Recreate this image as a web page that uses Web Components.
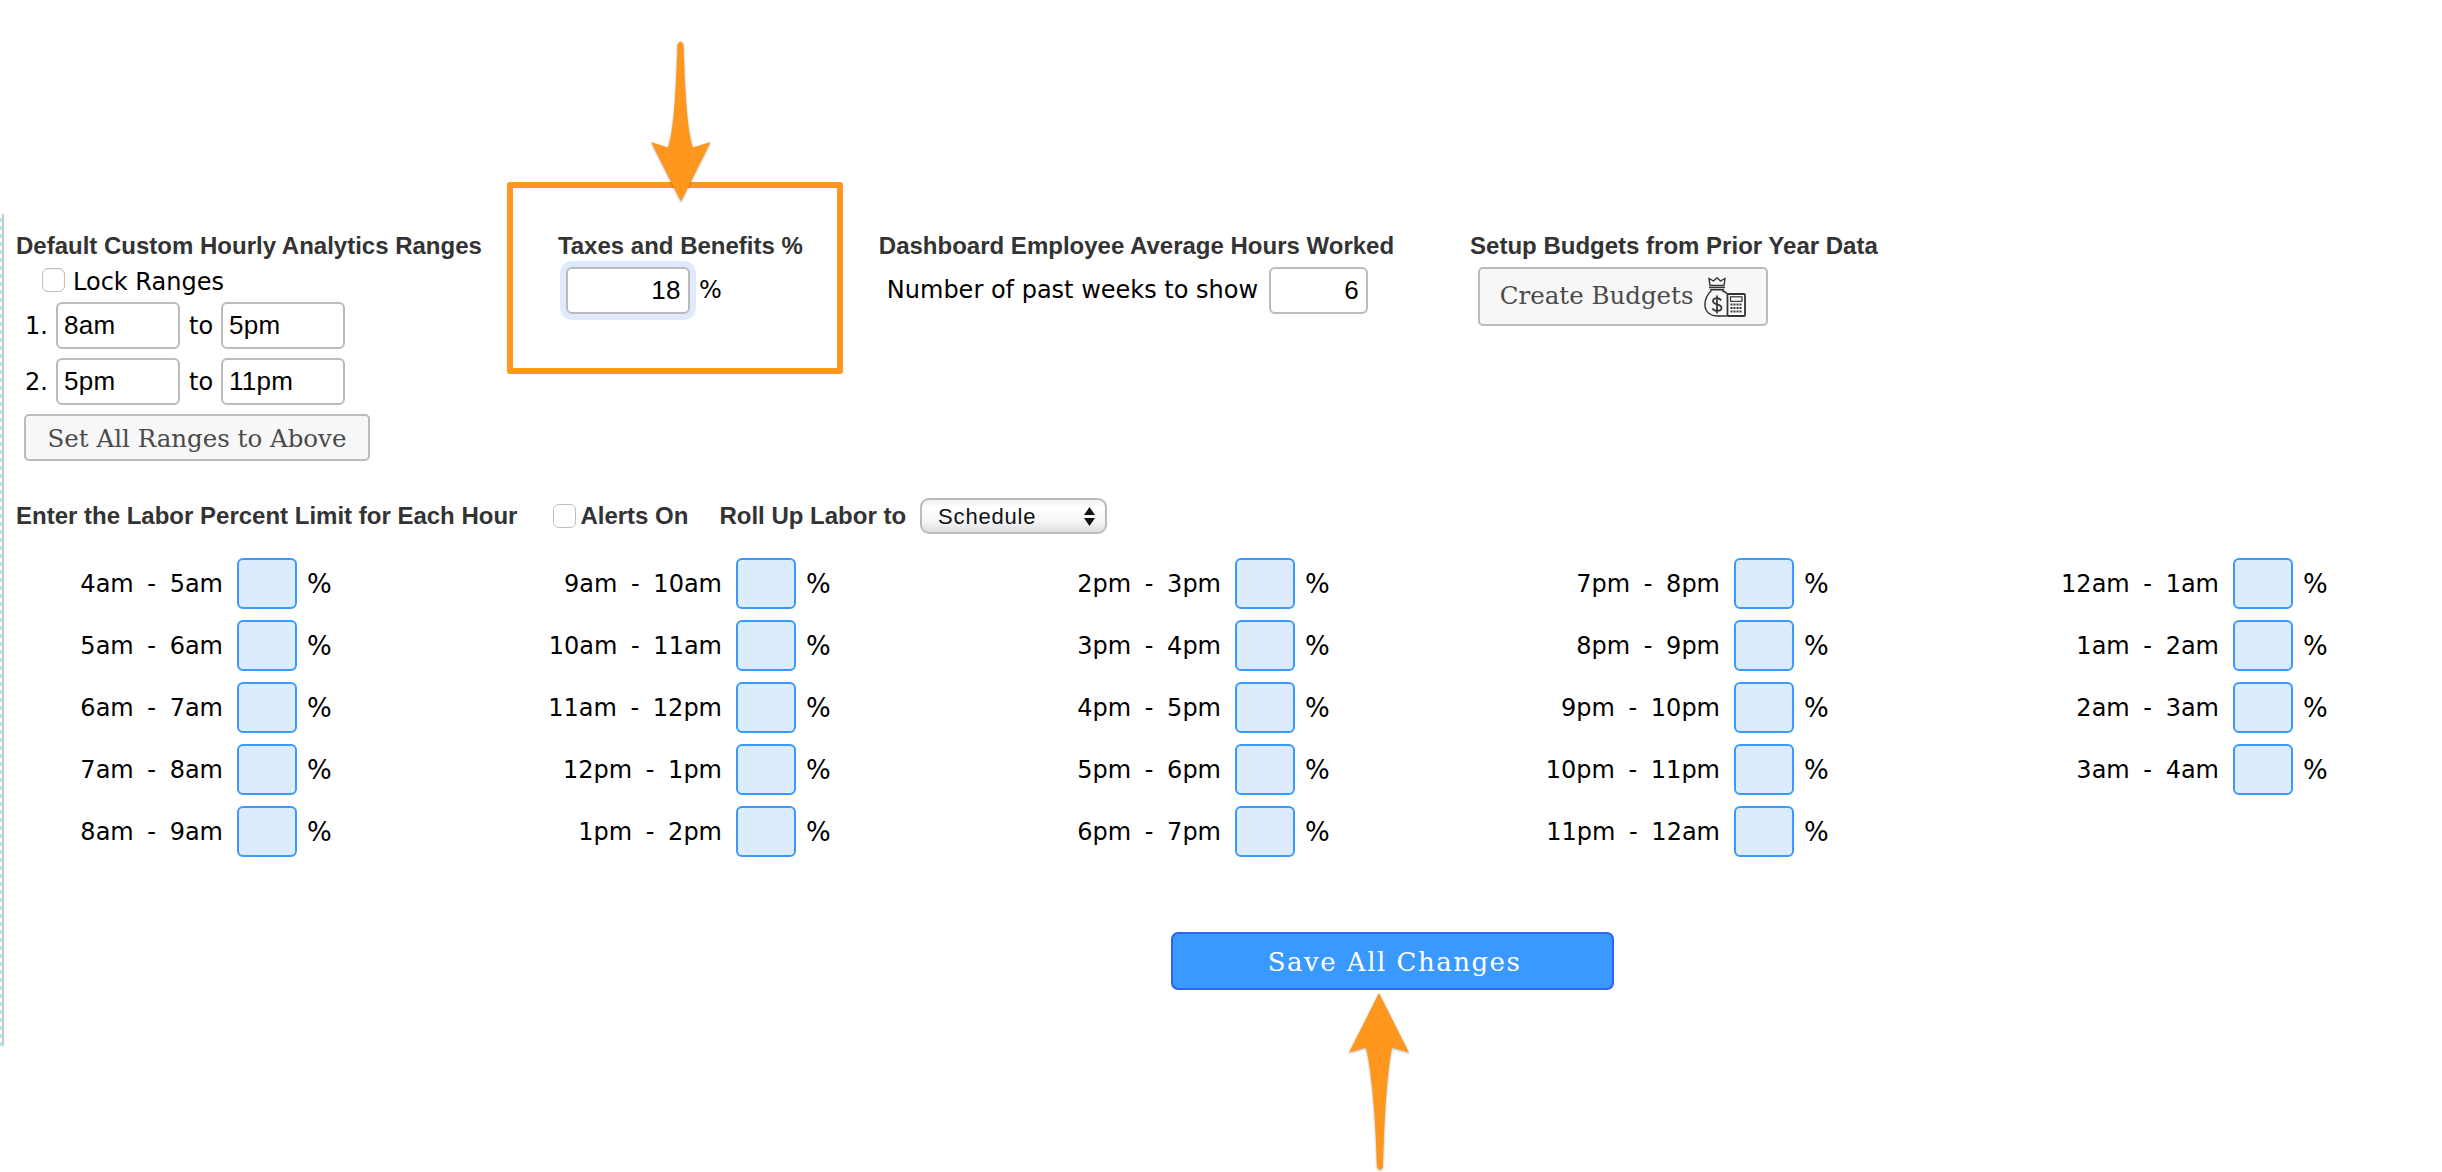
<!DOCTYPE html>
<html>
<head>
<meta charset="utf-8">
<title>Labor Settings</title>
<style>
html, body { margin: 0; padding: 0; background: #fff; }
body { position: relative; height: 1172px; overflow: hidden; font-family: "DejaVu Sans", sans-serif; }
</style>
</head>
<body>
<settings-panel>
  <div slot="top">
    <setting-group heading="Default Custom Hourly Analytics Ranges">
      <check-label indent="26">Lock Ranges</check-label>
      <range-row index="1." from="8am" to="5pm"></range-row>
      <range-row index="2." from="5pm" to="11pm"></range-row>
      <push-button style="margin-left:8px;width:346px;height:47px;--nudge-top:2px">Set All Ranges to Above</push-button>
    </setting-group>
    <setting-group heading="Taxes and Benefits %">
      <value-row indent="8" value="18" width="124" focused>
        <span slot="after">%</span>
      </value-row>
    </setting-group>
    <setting-group heading="Dashboard Employee Average Hours Worked">
      <value-row indent="8" value="6" width="99" gap="11">
        <span slot="before">Number of past weeks to show</span>
      </value-row>
    </setting-group>
    <setting-group heading="Setup Budgets from Prior Year Data">
      <push-button style="margin-left:8px;margin-top:8px;width:290px;height:59px;--nudge-bottom:2px">
        Create Budgets
        <budget-icon slot="icon"></budget-icon>
      </push-button>
    </setting-group>
  </div>
  <labor-header slot="labor"></labor-header>
  <hour-grid slot="grid"></hour-grid>
  <save-button slot="save">Save All Changes</save-button>
</settings-panel>
<callout-box></callout-box>
<callout-arrow dir="down"></callout-arrow>
<callout-arrow dir="up"></callout-arrow>

<script>
const headingFont = `"Liberation Sans", Arial, sans-serif`;
const slabFont = `"DejaVu Serif", serif`;

class SettingsPanel extends HTMLElement {
  constructor() {
    super();
    this.attachShadow({ mode: "open" });
    this.shadowRoot.innerHTML = `
      <style>
        :host { display: block; margin-top: 214px; height: 832px; position: relative; box-sizing: border-box; padding: 19px 0 0 16px; color: #000; font: 24px "DejaVu Sans", sans-serif; }
        .strip { position: absolute; left: 0; top: 0; bottom: 0; width: 2px; border-right: 2px solid #c9c9c9; background: repeating-linear-gradient(#fff 0 4px, #a8ecf5 4px 8px); }
        .labor { margin-top: 37px; }
        .grid { margin-top: 24px; margin-left: 1px; }
        .save { margin: 75px 0 0 1155px; }
        ::slotted([slot=top]) { display: flex; gap: 76px; height: 228px; }
      </style>
      <div class="strip"></div>
      <slot name="top"></slot>
      <div class="labor"><slot name="labor"></slot></div>
      <div class="grid"><slot name="grid"></slot></div>
      <div class="save"><slot name="save"></slot></div>`;
  }
}

class SettingGroup extends HTMLElement {
  constructor() {
    super();
    this.attachShadow({ mode: "open" });
    this.shadowRoot.innerHTML = `
      <style>
        :host { display: block; flex: none; }
        h3 { margin: 0; height: 26px; font: bold 24px/26px ${headingFont}; color: #333; white-space: nowrap; }
        .body { display: flex; flex-direction: column; }
      </style>
      <h3>${this.getAttribute("heading")}</h3>
      <div class="body"><slot></slot></div>`;
  }
}

class CheckLabel extends HTMLElement {
  constructor() {
    super();
    this.attachShadow({ mode: "open" });
    const indent = this.getAttribute("indent") || 0;
    this.shadowRoot.innerHTML = `
      <style>
        :host { display: flex; align-items: center; gap: 8px; height: 42px; margin-bottom: 1px; padding-left: ${indent}px; white-space: nowrap; }
        input { appearance: none; margin: 0; width: 23px; height: 24px; box-sizing: border-box; background: #fff; border: 1px solid #bdbdbd; border-radius: 6px; box-shadow: inset 0 1px 1px #eee; }
        span { padding-top: 3px; }
      </style>
      <input type="checkbox"><span><slot></slot></span>`;
  }
}

class TextField extends HTMLElement {
  constructor() {
    super();
    this.attachShadow({ mode: "open" });
    const width = this.getAttribute("width") || 124;
    const align = this.getAttribute("align") || "left";
    const glow = this.hasAttribute("focused") ? "box-shadow: 0 0 0 6px #deeafc;" : "";
    this.shadowRoot.innerHTML = `
      <style>
        :host { display: block; flex: none; }
        input { display: block; width: ${width}px; height: 47px; box-sizing: border-box; padding: 0 7px 0 6px; font: 26px ${headingFont}; letter-spacing: .3px; color: #000; text-align: ${align}; background: #fff; border: 2px solid #bbb; border-radius: 6px; outline: none; ${glow} }
      </style>
      <input type="text" value="${this.getAttribute("value")}">`;
  }
}

class RangeRow extends HTMLElement {
  constructor() {
    super();
    this.attachShadow({ mode: "open" });
    this.shadowRoot.innerHTML = `
      <style>
        :host { display: flex; align-items: center; height: 47px; margin-bottom: 9px; padding-left: 9px; }
        .num { width: 31px; }
        .to { width: 41px; padding-left: 9px; box-sizing: border-box; }
      </style>
      <span class="num">${this.getAttribute("index")}</span>
      <text-field value="${this.getAttribute("from")}"></text-field>
      <span class="to">to</span>
      <text-field value="${this.getAttribute("to")}"></text-field>`;
  }
}

class ValueRow extends HTMLElement {
  constructor() {
    super();
    this.attachShadow({ mode: "open" });
    const focused = this.hasAttribute("focused") ? "focused" : "";
    this.shadowRoot.innerHTML = `
      <style>
        :host { display: flex; align-items: center; gap: ${this.getAttribute("gap") || 9}px; height: 47px; margin-top: 8px; padding-left: ${this.getAttribute("indent")}px; white-space: nowrap; }
        ::slotted(span) { padding-bottom: 2px; }
      </style>
      <slot name="before"></slot>
      <text-field value="${this.getAttribute("value")}" width="${this.getAttribute("width")}" align="right" ${focused}></text-field>
      <slot name="after"></slot>`;
  }
}

class PushButton extends HTMLElement {
  constructor() {
    super();
    this.attachShadow({ mode: "open" });
    this.shadowRoot.innerHTML = `
      <style>
        :host { display: flex; box-sizing: border-box; align-items: center; justify-content: center; gap: 11px; flex: none; background: #f7f7f7; border: 2px solid #bbb; border-radius: 5px; font: 24.5px ${slabFont}; color: #4b4b4b; white-space: nowrap; }
        span { padding: var(--nudge-top, 0) 0 var(--nudge-bottom, 0); }
      </style>
      <span><slot></slot></span><slot name="icon"></slot>`;
  }
}

class BudgetIcon extends HTMLElement {
  constructor() {
    super();
    this.attachShadow({ mode: "open" });
    this.shadowRoot.innerHTML = `
      <style>:host { display: block; width: 42px; height: 40px; } svg { display: block; }</style>
      <svg width="42" height="40" viewBox="0 0 42 40" fill="none" stroke="#333" stroke-width="1.4">
        <path d="M5 1.5 9.5 4 13 .8 16.5 4 21 1.5 20 8.5H6Z"/>
        <path d="M5 10.5H21M6 12.8H20" stroke-width="1.6"/>
        <path d="M7.5 13.5C2.5 18 .7 24 1 29c.4 6 5.5 9.800 12 10H23"/>
        <path d="M18 13.5c2.500 1 4.500 2.300 6 4"/>
        <path d="M17 23.500c-.8-1.600-2.200-2.300-4-2.300-2.300 0-4 1.200-4 3 0 4 8.500 2.300 8.500 6.500 0 1.900-1.900 3.100-4.500 3.100-2 0-3.700-.8-4.500-2.500M13 18.500V36.500" stroke-width="1.7"/>
        <rect x="23.500" y="17" width="17.500" height="22" rx="1" fill="#fff" stroke-width="1.800"/>
        <rect x="26.500" y="19.800" width="11.500" height="4.500" stroke-width="1.200"/>
        <path d="M26.500 27.500H38M26.500 31H38M26.500 34.500H38" stroke-width="2" stroke-dasharray="2 1"/>
      </svg>`;
  }
}

class LaborHeader extends HTMLElement {
  constructor() {
    super();
    this.attachShadow({ mode: "open" });
    this.shadowRoot.innerHTML = `
      <style>
        :host { display: flex; align-items: center; height: 36px; font: bold 24px ${headingFont}; color: #333; white-space: nowrap; }
        input { appearance: none; margin: 0 0 0 36px; width: 23px; height: 24px; box-sizing: border-box; background: #fff; border: 1px solid #bdbdbd; border-radius: 6px; }
        .alerts { margin-left: 4px; }
        .roll { margin-left: 31px; }
        .pick { position: relative; margin-left: 14px; width: 187px; height: 36px; }
        select { appearance: none; display: block; width: 100%; height: 100%; box-sizing: border-box; margin: 0; padding: 0 0 0 16px; font: 22px ${headingFont}; letter-spacing: .8px; color: #111; border: 2px solid #bbb; border-radius: 9px; background: linear-gradient(#f2f2f2, #fff 25%, #f4f4f4 70%, #ddd); outline: none; }
        svg { position: absolute; right: 12px; top: 9px; }
      </style>
      <span>Enter the Labor Percent Limit for Each Hour</span>
      <input type="checkbox"><span class="alerts">Alerts On</span>
      <span class="roll">Roll Up Labor to</span>
      <div class="pick">
        <select><option>Schedule</option></select>
        <svg width="11" height="19" viewBox="0 0 11 19" fill="#111"><path d="M5.500 0 11 8H0ZM0 11H11L5.500 19Z"/></svg>
      </div>`;
  }
}

class HourLimit extends HTMLElement {
  constructor() {
    super();
    this.attachShadow({ mode: "open" });
    this.shadowRoot.innerHTML = `
      <style>
        :host { display: flex; align-items: center; height: 51px; white-space: nowrap; }
        .label { width: 206px; text-align: right; margin-right: 14px; word-spacing: 6px; }
        .pct { font-size: 26px; }
        input { display: block; width: 60px; height: 51px; box-sizing: border-box; background: #dcecfe; border: 2px solid #3a99ff; border-radius: 6px; outline: none; padding: 0; margin-right: 10px; }
      </style>
      <span class="label"><slot></slot></span><input type="text"><span class="pct">%</span>`;
  }
}

const hourRanges = [
  "4am - 5am", "5am - 6am", "6am - 7am", "7am - 8am", "8am - 9am",
  "9am - 10am", "10am - 11am", "11am - 12pm", "12pm - 1pm", "1pm - 2pm",
  "2pm - 3pm", "3pm - 4pm", "4pm - 5pm", "5pm - 6pm", "6pm - 7pm",
  "7pm - 8pm", "8pm - 9pm", "9pm - 10pm", "10pm - 11pm", "11pm - 12am",
  "12am - 1am", "1am - 2am", "2am - 3am", "3am - 4am",
];

class HourGrid extends HTMLElement {
  constructor() {
    super();
    this.attachShadow({ mode: "open" });
    const cells = hourRanges.map((range) => `<hour-limit>${range}</hour-limit>`).join("");
    this.shadowRoot.innerHTML = `
      <style>
        :host { display: grid; grid-auto-flow: column; grid-template-rows: repeat(5, 51px); grid-auto-columns: 499px; row-gap: 11px; }
      </style>
      ${cells}`;
  }
}

class SaveButton extends HTMLElement {
  constructor() {
    super();
    this.attachShadow({ mode: "open" });
    this.shadowRoot.innerHTML = `
      <style>
        :host { display: flex; align-items: center; justify-content: center; box-sizing: border-box; width: 443px; height: 58px; padding: 2px 0 0 4px; background: #3a99ff; border: 2px solid #2f62f5; border-radius: 7px; color: #fff; font: 26px ${slabFont}; letter-spacing: 1.5px; white-space: nowrap; }
      </style>
      <slot></slot>`;
  }
}

// annotations drawn over the form
class CalloutBox extends HTMLElement {
  constructor() {
    super();
    this.attachShadow({ mode: "open" });
    this.shadowRoot.innerHTML = `
      <style>
        :host { position: absolute; left: 507px; top: 182px; width: 336px; height: 192px; box-sizing: border-box; border: 6px solid #ff961e; border-radius: 3px; }
      </style>`;
  }
}

class CalloutArrow extends HTMLElement {
  constructor() {
    super();
    this.attachShadow({ mode: "open" });
    const up = this.getAttribute("dir") === "up";
    const path = up
      ? "M30 1 60 60.500 43 55.500C37 87 35 137 34 175Q31 181 28 175C27 137 24 87 17 55.500L0 60.500Z"
      : "M27.500 5Q30.500 0 33.500 5C35 51 37 91 43 108.500L60.500 103 31 162.500 1 103 18 108.500C24 91 26 51 27.500 5Z";
    const place = up ? "left: 1349px; top: 992px; height: 180px;" : "left: 650px; top: 39px; height: 164px;";
    this.shadowRoot.innerHTML = `
      <style>
        :host { position: absolute; ${place} width: 62px; }
        svg { display: block; overflow: visible; filter: drop-shadow(0 1px 1px rgba(0,0,0,.3)); }
      </style>
      <svg width="62" height="${up ? 180 : 164}" viewBox="0 0 62 ${up ? 180 : 164}"><path fill="#ff961e" d="${path}"/></svg>`;
  }
}

customElements.define("settings-panel", SettingsPanel);
customElements.define("setting-group", SettingGroup);
customElements.define("check-label", CheckLabel);
customElements.define("text-field", TextField);
customElements.define("range-row", RangeRow);
customElements.define("value-row", ValueRow);
customElements.define("push-button", PushButton);
customElements.define("budget-icon", BudgetIcon);
customElements.define("labor-header", LaborHeader);
customElements.define("hour-limit", HourLimit);
customElements.define("hour-grid", HourGrid);
customElements.define("save-button", SaveButton);
customElements.define("callout-box", CalloutBox);
customElements.define("callout-arrow", CalloutArrow);
</script>
</body>
</html>
